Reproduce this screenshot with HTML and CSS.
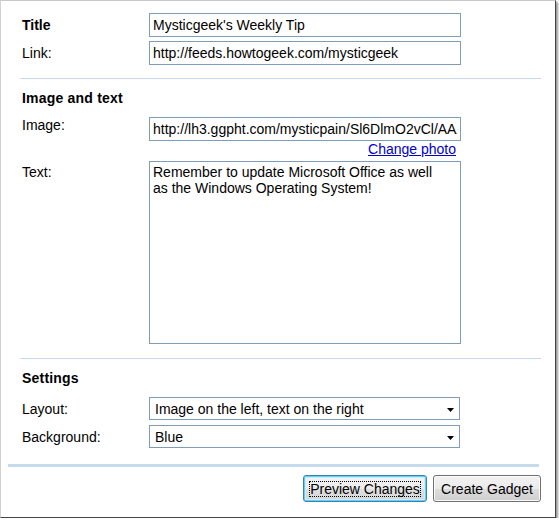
FILE: index.html
```html
<!DOCTYPE html>
<html>
<head>
<meta charset="utf-8">
<title>Gadget</title>
<link rel="stylesheet" href="styles.css">
</head>
<body>
<div class="window">
  <div class="rows">
    <div class="row center">
      <span class="lbl bold">Title</span>
      <input class="field" type="text" value="Mysticgeek's Weekly Tip">
    </div>
    <div class="row center">
      <span class="lbl">Link:</span>
      <input class="field" type="text" value="http://feeds.howtogeek.com/mysticgeek">
    </div>
  </div>
  <div class="sep sep-a"></div>

  <div class="heading">Image and text</div>
  <div class="row top img-row">
    <span class="lbl">Image:</span>
    <div class="col">
      <input class="field" type="text" value="http://lh3.ggpht.com/mysticpain/Sl6DlmO2vCl/AAAAAAAAAF0/photo.jpg">
      <a class="change" href="#">Change photo</a>
    </div>
  </div>
  <div class="row top txt-row">
    <span class="lbl lbl-text">Text:</span>
    <textarea class="area">Remember to update Microsoft Office as well
as the Windows Operating System!</textarea>
  </div>
  <div class="sep sep-b"></div>

  <div class="heading heading-settings">Settings</div>
  <div class="row center sel-row1">
    <span class="lbl">Layout:</span>
    <div class="select"><span>Image on the left, text on the right</span><svg width="7" height="4" viewBox="0 0 7 4"><path d="M0 0H7L3.5 4Z" fill="#000"/></svg></div>
  </div>
  <div class="row center sel-row2">
    <span class="lbl">Background:</span>
    <div class="select"><span>Blue</span><svg width="7" height="4" viewBox="0 0 7 4"><path d="M0 0H7L3.5 4Z" fill="#000"/></svg></div>
  </div>

  <div class="thick"></div>
  <div class="buttons">
    <button class="btn btn-preview"><span class="focus">Preview Changes</span></button>
    <button class="btn btn-create">Create Gadget</button>
  </div>
</div>
</body>
</html>
```

FILE: styles.css
```css
html, body {
  margin: 0;
  padding: 0;
  background: #fff;
}

body {
  font-family: "Liberation Sans", Arial, sans-serif;
  font-size: 14px;
  line-height: 16px;
  color: #000;
}

.window {
  width: 556px;
  height: 518px;
  box-sizing: border-box;
  border-top: 1px solid #c9c9c9;
  border-left: 1px solid #d2d2d2;
  border-right: 1px solid #454545;
  border-bottom: 1px solid #454545;
  box-shadow: 2px 2px 2px rgba(0, 0, 0, 0.4);
  padding: 12px 14px 0 20px;
  display: flex;
  flex-direction: column;
}

.rows {
  display: flex;
  flex-direction: column;
  gap: 4px;
}

.row {
  display: flex;
}

.row.center {
  align-items: center;
}

.row.top {
  align-items: flex-start;
}

.lbl {
  width: 127px;
  padding-left: 1px;
  flex: none;
}

.bold {
  font-weight: bold;
}

.lbl-text {
  padding-top: 3px;
}

.field {
  width: 312px;
  height: 24px;
  box-sizing: border-box;
  border: 1px solid #7f9db9;
  padding: 0 3px;
  margin: 0;
  font-family: "Liberation Sans", Arial, sans-serif;
  font-size: 14px;
  color: #000;
  background: #fff;
  outline: none;
}

.sep {
  height: 1px;
  background: #c4d8ec;
  margin-left: -1px;
}

.sep-a {
  margin-top: 13px;
}

.sep-b {
  margin-top: 14px;
}

.heading {
  font-weight: bold;
  margin-top: 11px;
  padding-left: 1px;
  letter-spacing: 0.2px;
}

.img-row {
  margin-top: 11px;
}

.col {
  display: flex;
  flex-direction: column;
  width: 312px;
}

.change {
  align-self: flex-end;
  margin-right: 5px;
  color: #0000cc;
  text-decoration: underline;
}

.txt-row {
  margin-top: 4px;
}

.area {
  width: 312px;
  height: 183px;
  box-sizing: border-box;
  border: 1px solid #7f9db9;
  padding: 2px 3px;
  margin: 0;
  font-family: "Liberation Sans", Arial, sans-serif;
  font-size: 14px;
  line-height: 16px;
  color: #000;
  resize: none;
  overflow: hidden;
  white-space: pre;
  outline: none;
}

.sel-row1 {
  margin-top: 11px;
}

.sel-row2 {
  margin-top: 5px;
}

.select {
  width: 311px;
  height: 23px;
  box-sizing: border-box;
  border: 1px solid #7f9db9;
  padding: 0 5px 0 5px;
  display: flex;
  align-items: center;
  justify-content: space-between;
  background: #fff;
}

.select svg {
  display: block;
  margin-top: 2px;
}

.thick {
  height: 3px;
  background: #c6daee;
  margin-top: 16px;
  margin-left: -13px;
  margin-right: 2px;
}

.buttons {
  display: flex;
  justify-content: flex-end;
  gap: 6px;
  margin-top: 8px;
}

.btn {
  height: 27px;
  box-sizing: border-box;
  border: 1px solid #707070;
  border-radius: 3px;
  background: linear-gradient(#f2f2f2 0%, #ebebeb 50%, #dddddd 50%, #cfcfcf 100%);
  box-shadow: inset 0 0 0 1px #fbfbfb;
  font-family: "Liberation Sans", Arial, sans-serif;
  font-size: 14px;
  color: #000;
  padding: 0;
  margin: 0;
  display: flex;
  align-items: center;
  justify-content: center;
}

.btn-preview {
  width: 124px;
  border-color: #3c7fb1;
  box-shadow: inset 0 0 0 1px #5fd0f8, inset 0 0 0 2px #c9eefc;
  background: linear-gradient(#f4f4f4 0%, #ececec 50%, #e0e0e0 50%, #d6d6d6 100%);
}

.btn-create {
  width: 108px;
}

.focus {
  border: 1px dotted #000;
  padding: 0 0 0 0;
  line-height: 14px;
  height: 14px;
  display: block;
  padding-top: 0;
  padding-bottom: 0;
}
```
